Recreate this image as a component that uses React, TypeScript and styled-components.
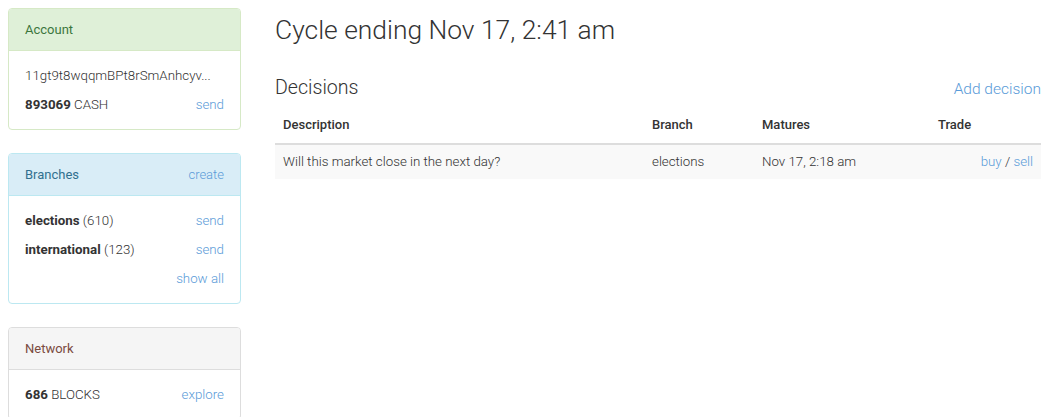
import React from 'react'
import styled, { createGlobalStyle } from 'styled-components';

const GlobalStyle = createGlobalStyle`
  * { box-sizing: border-box; }
  body {
    margin: 0;
    background: #fff;
    font-family: Roboto, "Liberation Sans", Arial, sans-serif;
    font-size: 13.3px;
    font-weight: 300;
    color: #333;
  }
`

const Page = styled.div`
  display: grid;
  grid-template-columns: 233px 1fr;
  column-gap: 34px;
  padding: 8px 23px 0 8px;
`

const Sidebar = styled.aside`
  display: flex;
  flex-direction: column;
  gap: 23px;
`

const Panel = styled.section<{ $border: string }>`
  border: 1px solid ${p => p.$border};
  border-radius: 4px;
  background: #fff;
  overflow: hidden;
`

const PanelHeading = styled.div<{ $bg: string, $color: string, $border: string }>`
  display: flex;
  justify-content: space-between;
  padding: 11px 16px 10px;
  line-height: 20px;
  font-size: 13px;
  font-weight: 400;
  background: ${p => p.$bg};
  color: ${p => p.$color};
  border-bottom: 1px solid ${p => p.$border};
`

const PanelBody = styled.div`
  display: flex;
  flex-direction: column;
  gap: 9px;
  padding: 15px 16px 14px;
`

const Line = styled.div<{ $end?: boolean }>`
  display: flex;
  justify-content: ${p => p.$end ? 'flex-end' : 'space-between'};
  line-height: 20px;
  white-space: nowrap;
`

const Strong = styled.b`
  font-weight: 700;
`

const Link = styled.a`
  color: #5a9bd8;
  font-weight: 300;
  text-decoration: none;
  cursor: pointer;
`

const Main = styled.main`
  display: flex;
  flex-direction: column;
`

const Title = styled.h1`
  margin: 5px 0 0;
  font-size: 26.4px;
  font-weight: 300;
  line-height: 34px;
  color: #333;
`

const SectionHead = styled.div`
  display: flex;
  justify-content: space-between;
  align-items: baseline;
  margin-top: 28px;
  line-height: 26px;
`

const SectionTitle = styled.h2`
  margin: 0;
  font-size: 19.6px;
  font-weight: 300;
`

const AddLink = styled(Link)`
  font-size: 15.5px;
`

const Table = styled.table`
  width: 100%;
  border-collapse: collapse;
  margin-top: 5px;
  table-layout: fixed;
`

const Th = styled.th<{ $w?: number }>`
  width: ${p => p.$w ? `${p.$w}px` : 'auto'};
  text-align: left;
  font-size: 13px;
  font-weight: 500;
  padding: 8px;
  line-height: 20px;
  border-bottom: 2px solid #ddd;
`

const Row = styled.tr`
  background: #f9f9f9;
`

const Td = styled.td<{ $right?: boolean }>`
  padding: 8px;
  line-height: 18px;
  text-align: ${p => p.$right ? 'right' : 'left'};
`

export default function App() {
  return (
    <>
      <GlobalStyle />
      <Page>
        <Sidebar>
          <Panel $border="#d6e9c6">
            <PanelHeading $bg="#dff0d8" $color="#3c763d" $border="#d6e9c6">Account</PanelHeading>
            <PanelBody>
              <Line>11gt9t8wqqmBPt8rSmAnhcyv...</Line>
              <Line><span><Strong>893069</Strong> CASH</span><Link>send</Link></Line>
            </PanelBody>
          </Panel>
          <Panel $border="#bce8f1">
            <PanelHeading $bg="#d9edf7" $color="#31708f" $border="#bce8f1">
              Branches<Link>create</Link>
            </PanelHeading>
            <PanelBody>
              <Line><span><Strong>elections</Strong> (610)</span><Link>send</Link></Line>
              <Line><span><Strong>international</Strong> (123)</span><Link>send</Link></Line>
              <Line $end><Link>show all</Link></Line>
            </PanelBody>
          </Panel>
          <Panel $border="#ddd">
            <PanelHeading $bg="#f5f5f5" $color="#7a4a40" $border="#ddd">Network</PanelHeading>
            <PanelBody>
              <Line><span><Strong>686</Strong> BLOCKS</span><Link>explore</Link></Line>
            </PanelBody>
          </Panel>
        </Sidebar>
        <Main>
          <Title>Cycle ending Nov 17, 2:41 am</Title>
          <SectionHead>
            <SectionTitle>Decisions</SectionTitle>
            <AddLink>Add decision</AddLink>
          </SectionHead>
          <Table>
            <thead>
              <tr>
                <Th $w={369}>Description</Th>
                <Th $w={110}>Branch</Th>
                <Th $w={176}>Matures</Th>
                <Th>Trade</Th>
              </tr>
            </thead>
            <tbody>
              <Row>
                <Td>Will this market close in the next day?</Td>
                <Td>elections</Td>
                <Td>Nov 17, 2:18 am</Td>
                <Td $right><Link>buy</Link> / <Link>sell</Link></Td>
              </Row>
            </tbody>
          </Table>
        </Main>
      </Page>
    </>
  )
}
